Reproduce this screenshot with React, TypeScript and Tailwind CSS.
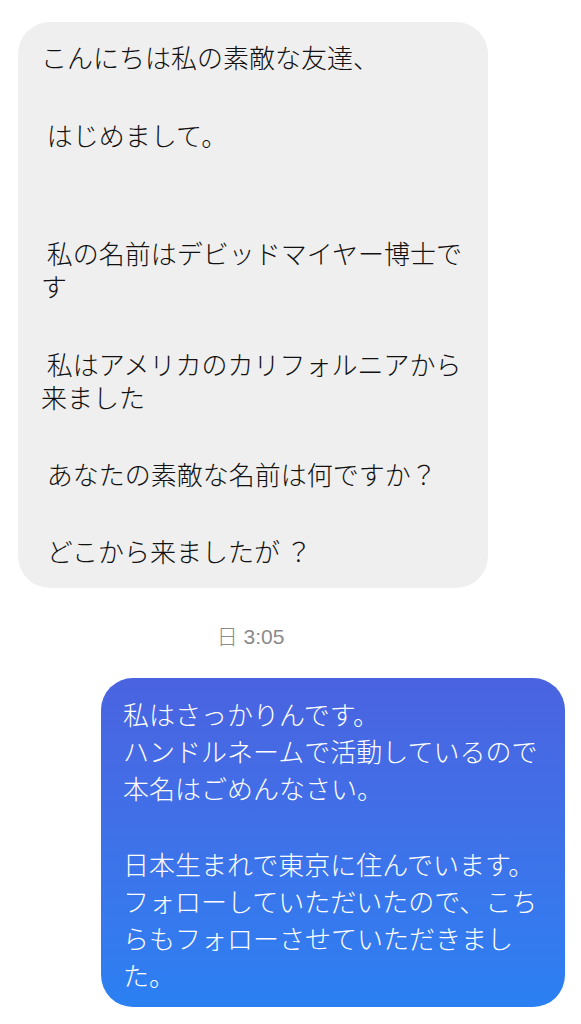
const incoming = [
  { text: 'こんにちは私の素敵な友達、', gap: '' },
  { text: ' はじめまして。', gap: 'mt-[45px]' },
  { text: ' 私の名前はデビッドマイヤー博士です', gap: 'mt-[85px]' },
  { text: ' 私はアメリカのカリフォルニアから来ました', gap: 'mt-[45px]' },
  { text: ' あなたの素敵な名前は何ですか？', gap: 'mt-[44px]' },
  { text: ' どこから来ましたが ？', gap: 'mt-[44px]' },
]

const outgoing = [
  '私はさっかりんです。\nハンドルネームで活動しているので本名はごめんなさい。',
  '日本生まれで東京に住んでいます。\nフォローしていただいたので、こちらもフォローさせていただきました。',
]

export default function App() {
  return (
    <div className="min-h-screen w-[581px] bg-white pt-[22px] font-['Noto_Sans_CJK_JP',sans-serif] font-light">
      <div className="pl-[18px]">
        <div className="w-[470px] rounded-[32px] bg-[#efefef] pl-[23px] pr-[20px] pt-[18px] pb-[21px] text-[26px] leading-[33px] text-[#111]">
          {incoming.map((m) => (
            <p key={m.text} className={`whitespace-pre-wrap ${m.gap}`}>
              {m.text}
            </p>
          ))}
        </div>
      </div>

      <div className="mt-[36px] flex justify-center pr-[80px] font-['Liberation_Sans','Noto_Sans_CJK_JP',sans-serif] text-[21px] leading-[26px] text-[#8a8a8a]">
        日 3:05
      </div>

      <div className="mt-[28px] flex justify-end pr-[16px]">
        <div className="w-[464px] rounded-[32px] bg-gradient-to-b from-[#4a63e0] to-[#2a80f2] px-[22px] pt-[17px] pb-[14px] text-[26px] leading-[37px] text-white">
          {outgoing.map((t, i) => (
            <p key={i} className={`whitespace-pre-wrap ${i > 0 ? 'mt-[39px]' : ''}`}>
              {t}
            </p>
          ))}
        </div>
      </div>
    </div>
  )
}
